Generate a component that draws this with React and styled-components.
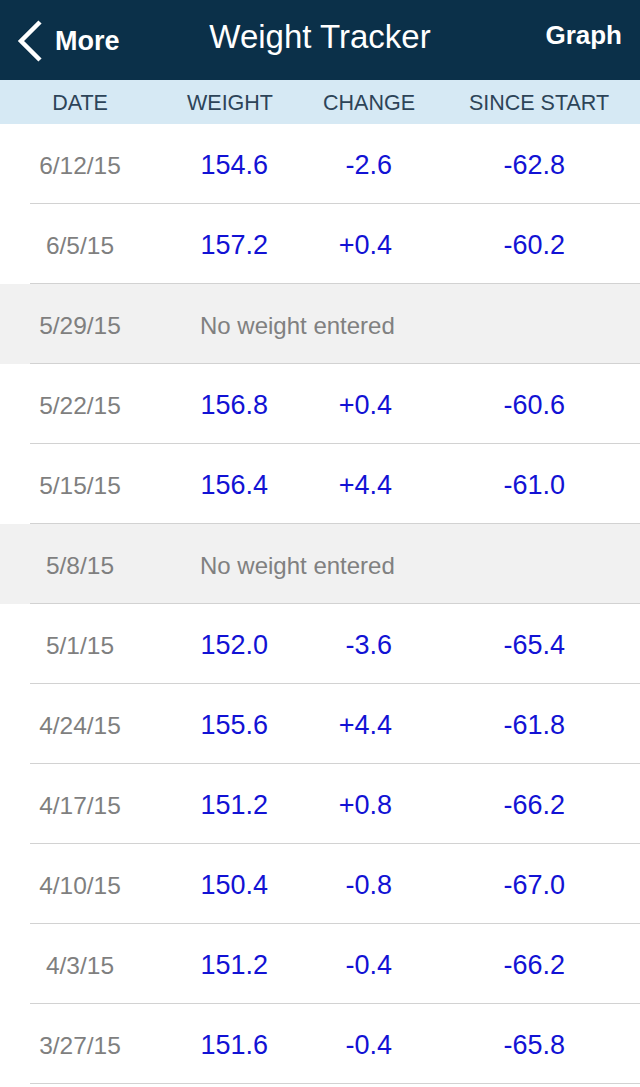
import styled, { createGlobalStyle } from 'styled-components';

const GlobalStyle = createGlobalStyle`
  html, body {
    margin: 0;
    padding: 0;
    background: #ffffff;
  }
`;

const Screen = styled.div`
  width: 640px;
  height: 1087px;
  overflow: hidden;
  background: #ffffff;
  font-family: "Liberation Sans", Arial, Helvetica, sans-serif;
`;

const NavBar = styled.div`
  height: 80px;
  background: #0b3049;
  display: flex;
  align-items: center;
  justify-content: space-between;
  padding: 0 18px 0 16px;
  box-sizing: border-box;
  color: #ffffff;
  position: relative;
`;

const BackButton = styled.div`
  display: flex;
  align-items: center;
  gap: 11px;
  font-weight: bold;
  font-size: 27px;
  padding-top: 2px;
`;

const Title = styled.div`
  position: absolute;
  left: 0;
  right: 0;
  text-align: center;
  font-size: 33px;
  top: 18px;
  pointer-events: none;
`;

const NavAction = styled.div`
  font-weight: bold;
  font-size: 26px;
  margin-top: -10px;
`;

const Columns = styled.div`
  display: grid;
  grid-template-columns: 160px 140px 138px 202px;
  align-items: center;
`;

const HeaderRow = styled(Columns)`
  height: 44px;
  padding-top: 3px;
  box-sizing: border-box;
  background: #d6e9f4;
  color: #2d4458;
  font-size: 21.5px;
  text-align: center;
`;

const Row = styled(Columns)`
  height: 80px;
  padding-top: 3px;
  box-sizing: border-box;
  position: relative;
  background: ${p => (p.$empty ? '#f1f1f1' : '#ffffff')};

  &::after {
    content: '';
    position: absolute;
    left: 30px;
    right: 0;
    bottom: 0;
    height: 1px;
    background: #d2d2d2;
  }
`;

const DateCell = styled.div`
  text-align: center;
  color: #7f7f7f;
  font-size: 24.5px;
`;

const Value = styled.div`
  text-align: right;
  color: #1212d4;
  font-size: 27px;
  padding-right: ${p => p.$pad}px;
`;

const EmptyNote = styled.div`
  grid-column: 2 / 5;
  padding-left: 40px;
  color: #808080;
  font-size: 24px;
`;

const rows = [
  ['6/12/15', '154.6', '-2.6', '-62.8'],
  ['6/5/15', '157.2', '+0.4', '-60.2'],
  ['5/29/15'],
  ['5/22/15', '156.8', '+0.4', '-60.6'],
  ['5/15/15', '156.4', '+4.4', '-61.0'],
  ['5/8/15'],
  ['5/1/15', '152.0', '-3.6', '-65.4'],
  ['4/24/15', '155.6', '+4.4', '-61.8'],
  ['4/17/15', '151.2', '+0.8', '-66.2'],
  ['4/10/15', '150.4', '-0.8', '-67.0'],
  ['4/3/15', '151.2', '-0.4', '-66.2'],
  ['3/27/15', '151.6', '-0.4', '-65.8'],
];

const Chevron = () => (
  <svg width="28" height="44" viewBox="0 0 28 44">
    <path d="M24 3 L5 22 L24 41" fill="none" stroke="#fff" strokeWidth="4.5" />
  </svg>
);

export default function App() {
  return (
    <Screen>
      <GlobalStyle />
      <NavBar>
        <BackButton>
          <Chevron />
          <span>More</span>
        </BackButton>
        <Title>Weight Tracker</Title>
        <NavAction>Graph</NavAction>
      </NavBar>
      <HeaderRow>
        <div>DATE</div>
        <div>WEIGHT</div>
        <div>CHANGE</div>
        <div>SINCE START</div>
      </HeaderRow>
      {rows.map(([date, weight, change, since]) =>
        weight ? (
          <Row key={date}>
            <DateCell>{date}</DateCell>
            <Value $pad={32}>{weight}</Value>
            <Value $pad={46}>{change}</Value>
            <Value $pad={75}>{since}</Value>
          </Row>
        ) : (
          <Row key={date} $empty>
            <DateCell>{date}</DateCell>
            <EmptyNote>No weight entered</EmptyNote>
          </Row>
        )
      )}
    </Screen>
  );
}
